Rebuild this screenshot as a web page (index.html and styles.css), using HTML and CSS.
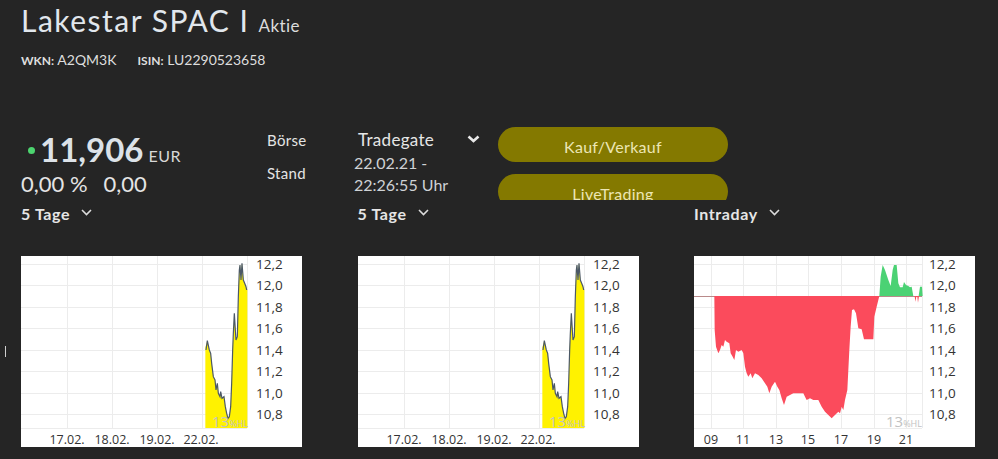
FILE: index.html
```html
<!DOCTYPE html>
<html lang="de">
<head>
<meta charset="utf-8">
<title>Lakestar SPAC I Aktie</title>
<link rel="stylesheet" href="styles.css">
</head>
<body>
<div class="page">
  <header class="head">
    <h1 class="title">Lakestar SPAC I <span class="kind">Aktie</span></h1>
    <div class="ids">
      <span class="id"><b>WKN:</b> A2QM3K</span>
      <span class="id"><b>ISIN:</b> LU2290523658</span>
    </div>
  </header>

  <section class="quote">
    <div class="price-col">
      <div class="price"><span class="dot"></span><span class="num">11,906</span><span class="cur">EUR</span></div>
      <div class="change"><span>0,00 %</span><span class="abs">0,00</span></div>
    </div>
    <div class="label-col">
      <div class="lbl">Börse</div>
      <div class="lbl lbl2">Stand</div>
    </div>
    <div class="value-col">
      <div class="exchange"><span>Tradegate</span>
        <svg class="chev-bold" width="13" height="8" viewBox="0 0 13 8"><polyline points="1.5,1.5 6.5,6 11.5,1.5" fill="none" stroke="#e8e8e8" stroke-width="2.6"/></svg>
      </div>
      <div class="date">22.02.21 -<br>22:26:55 Uhr</div>
    </div>
    <div class="btn-col">
      <div class="btn">Kauf/Verkauf</div>
      <div class="btn btn2">LiveTrading</div>
    </div>
  </section>

  <section class="charts">
    <span class="tick"></span>
    <div class="chart-col">
      <div class="range">5 Tage <svg class="chev" width="11" height="7" viewBox="0 0 11 7"><polyline points="1,1 5.5,5.5 10,1" fill="none" stroke="#dcdcdc" stroke-width="1.6"/></svg></div>
      <svg class="chart" width="281" height="191" viewBox="0 0 281 191">
        <rect width="281" height="191" fill="#fff"/>
        <g stroke="#ececec" stroke-width="1">
          <line x1="0" y1="8.5" x2="226" y2="8.5"/><line x1="0" y1="29.5" x2="226" y2="29.5"/><line x1="0" y1="51.5" x2="226" y2="51.5"/><line x1="0" y1="72.5" x2="226" y2="72.5"/><line x1="0" y1="94.5" x2="226" y2="94.5"/><line x1="0" y1="115.5" x2="226" y2="115.5"/><line x1="0" y1="137.5" x2="226" y2="137.5"/><line x1="0" y1="158.5" x2="226" y2="158.5"/><line x1="0" y1="172.5" x2="226" y2="172.5"/>
          <line x1="46.5" y1="0" x2="46.5" y2="172"/><line x1="91.5" y1="0" x2="91.5" y2="172"/><line x1="136.5" y1="0" x2="136.5" y2="172"/><line x1="181.5" y1="0" x2="181.5" y2="172"/><line x1="226.5" y1="0" x2="226.5" y2="172"/>
        </g>
        <g transform="translate(159,-6) scale(0.33333)">
          <polygon fill="#fff200" points="76,534 76,292 82,272 88,300 92,310 95,340 100,380 105,390 108,420 112,400 115,430 120,440 122,425 126,445 132,440 136,470 140,490 144,505 148,500 152,470 155,400 158,300 160,250 163,190 166,240 168,270 172,260 175,140 178,60 180,45 183,90 186,40 190,90 194,100 198,110 202,120 202,534"/>
          <polyline fill="none" stroke="#4b5866" stroke-width="1.2" vector-effect="non-scaling-stroke" points="78,300 82,272 88,300 92,310 95,340 100,380 105,390 108,420 112,400 115,430 120,440 122,425 126,445 132,440 136,470 140,490 144,505 148,500 152,470 155,400 158,300 160,250 163,190 166,240 168,270 172,260 175,140 178,60 180,45 183,90 186,40 190,90 194,100 198,110 200,120"/>
        </g>
        <text class="hl" x="191" y="171">13<tspan class="hl-s">%HL</tspan></text>
        <g class="ylab">
          <text x="235" y="13">12,2</text><text x="235" y="34">12,0</text><text x="235" y="56">11,8</text><text x="235" y="77">11,6</text><text x="235" y="99">11,4</text><text x="235" y="120">11,2</text><text x="235" y="142">11,0</text><text x="235" y="163">10,8</text>
        </g>
        <g class="xlab">
          <text x="46" y="188">17.02.</text><text x="91" y="188">18.02.</text><text x="136" y="188">19.02.</text><text x="180" y="188">22.02.</text>
        </g>
      </svg>
    </div>

    <div class="chart-col">
      <div class="range">5 Tage <svg class="chev" width="11" height="7" viewBox="0 0 11 7"><polyline points="1,1 5.5,5.5 10,1" fill="none" stroke="#dcdcdc" stroke-width="1.6"/></svg></div>
      <svg class="chart" width="281" height="191" viewBox="0 0 281 191">
        <rect width="281" height="191" fill="#fff"/>
        <g stroke="#ececec" stroke-width="1">
          <line x1="0" y1="8.5" x2="226" y2="8.5"/><line x1="0" y1="29.5" x2="226" y2="29.5"/><line x1="0" y1="51.5" x2="226" y2="51.5"/><line x1="0" y1="72.5" x2="226" y2="72.5"/><line x1="0" y1="94.5" x2="226" y2="94.5"/><line x1="0" y1="115.5" x2="226" y2="115.5"/><line x1="0" y1="137.5" x2="226" y2="137.5"/><line x1="0" y1="158.5" x2="226" y2="158.5"/><line x1="0" y1="172.5" x2="226" y2="172.5"/>
          <line x1="46.5" y1="0" x2="46.5" y2="172"/><line x1="91.5" y1="0" x2="91.5" y2="172"/><line x1="136.5" y1="0" x2="136.5" y2="172"/><line x1="181.5" y1="0" x2="181.5" y2="172"/><line x1="226.5" y1="0" x2="226.5" y2="172"/>
        </g>
        <g transform="translate(159,-6) scale(0.33333)">
          <polygon fill="#fff200" points="76,534 76,292 82,272 88,300 92,310 95,340 100,380 105,390 108,420 112,400 115,430 120,440 122,425 126,445 132,440 136,470 140,490 144,505 148,500 152,470 155,400 158,300 160,250 163,190 166,240 168,270 172,260 175,140 178,60 180,45 183,90 186,40 190,90 194,100 198,110 202,120 202,534"/>
          <polyline fill="none" stroke="#4b5866" stroke-width="1.2" vector-effect="non-scaling-stroke" points="78,300 82,272 88,300 92,310 95,340 100,380 105,390 108,420 112,400 115,430 120,440 122,425 126,445 132,440 136,470 140,490 144,505 148,500 152,470 155,400 158,300 160,250 163,190 166,240 168,270 172,260 175,140 178,60 180,45 183,90 186,40 190,90 194,100 198,110 200,120"/>
        </g>
        <text class="hl" x="191" y="171">13<tspan class="hl-s">%HL</tspan></text>
        <g class="ylab">
          <text x="235" y="13">12,2</text><text x="235" y="34">12,0</text><text x="235" y="56">11,8</text><text x="235" y="77">11,6</text><text x="235" y="99">11,4</text><text x="235" y="120">11,2</text><text x="235" y="142">11,0</text><text x="235" y="163">10,8</text>
        </g>
        <g class="xlab">
          <text x="46" y="188">17.02.</text><text x="91" y="188">18.02.</text><text x="136" y="188">19.02.</text><text x="180" y="188">22.02.</text>
        </g>
      </svg>
    </div>

    <div class="chart-col">
      <div class="range">Intraday <svg class="chev" width="11" height="7" viewBox="0 0 11 7"><polyline points="1,1 5.5,5.5 10,1" fill="none" stroke="#dcdcdc" stroke-width="1.6"/></svg></div>
      <svg class="chart" width="281" height="191" viewBox="0 0 281 191">
        <rect width="281" height="191" fill="#fff"/>
        <g stroke="#ececec" stroke-width="1">
          <line x1="0" y1="8.5" x2="228" y2="8.5"/><line x1="0" y1="29.5" x2="228" y2="29.5"/><line x1="0" y1="51.5" x2="228" y2="51.5"/><line x1="0" y1="72.5" x2="228" y2="72.5"/><line x1="0" y1="94.5" x2="228" y2="94.5"/><line x1="0" y1="115.5" x2="228" y2="115.5"/><line x1="0" y1="137.5" x2="228" y2="137.5"/><line x1="0" y1="158.5" x2="228" y2="158.5"/><line x1="0" y1="172.5" x2="228" y2="172.5"/>
          <line x1="17.5" y1="0" x2="17.5" y2="172"/><line x1="49.5" y1="0" x2="49.5" y2="172"/><line x1="82.5" y1="0" x2="82.5" y2="172"/><line x1="114.5" y1="0" x2="114.5" y2="172"/><line x1="147.5" y1="0" x2="147.5" y2="172"/><line x1="180.5" y1="0" x2="180.5" y2="172"/><line x1="212.5" y1="0" x2="212.5" y2="172"/><line x1="228.5" y1="0" x2="228.5" y2="172"/>
        </g>
        <line x1="0" y1="40.5" x2="228" y2="40.5" stroke="#b98a8a" stroke-width="1"/>
        <g transform="translate(-14,-6) scale(0.33333)">
          <polygon fill="#fb4b5c" points="103,138 104,240 108,290 115,310 120,300 125,285 130,290 135,270 140,275 148,280 152,310 158,320 163,330 168,300 175,305 185,300 190,310 195,350 200,370 205,380 212,370 217,385 225,370 235,375 245,385 255,400 262,410 268,430 275,410 285,395 292,410 298,420 305,445 312,465 320,440 330,435 340,430 355,430 370,430 375,440 380,450 390,445 400,450 415,450 425,470 435,485 445,495 455,505 465,495 475,485 480,490 485,470 490,480 495,450 502,420 508,300 512,230 516,180 522,178 528,190 535,235 545,238 552,268 580,268 583,200 590,170 595,150 598,138"/>
          <polygon fill="#4bd274" points="598,138 602,80 608,45 615,60 625,90 632,108 638,60 642,45 650,45 655,100 660,112 668,112 672,96 678,105 685,108 690,112 695,110 700,138 716,138 720,110 726,110 728,138"/>
          <polygon fill="#fb4b5c" points="704,138 706,155 709,140 712,140 714,158 717,138"/>
        </g>
        <text class="hl" x="192" y="171">13<tspan class="hl-s">%HL</tspan></text>
        <g class="ylab">
          <text x="235" y="13">12,2</text><text x="235" y="34">12,0</text><text x="235" y="56">11,8</text><text x="235" y="77">11,6</text><text x="235" y="99">11,4</text><text x="235" y="120">11,2</text><text x="235" y="142">11,0</text><text x="235" y="163">10,8</text>
        </g>
        <g class="xlab">
          <text x="17" y="188">09</text><text x="49" y="188">11</text><text x="82" y="188">13</text><text x="114" y="188">15</text><text x="147" y="188">17</text><text x="180" y="188">19</text><text x="212" y="188">21</text>
        </g>
      </svg>
    </div>
  </section>
</div>
</body>
</html>
```

FILE: styles.css
```css
html, body {
  margin: 0;
  padding: 0;
  background: #252525;
}
body {
  width: 998px;
  height: 459px;
  overflow: hidden;
  font-family: Lato, "Noto Sans", sans-serif;
  color: #e6e6e6;
}
.page {
  padding: 2px 0 0 21px;
  position: relative;
}
.title {
  margin: 0;
  font-size: 30px;
  line-height: 36px;
  font-weight: 400;
  color: #e1e7ed;
  letter-spacing: 1.5px;
}
.kind {
  font-size: 17px;
  letter-spacing: 0.4px;
  color: #dcdcdc;
}
.ids {
  margin-top: 7px;
  display: flex;
  gap: 21px;
  font-size: 14px;
  line-height: 17px;
  color: #dedede;
}
.ids b {
  font-size: 12px;
  font-weight: 700;
}
.quote {
  margin-top: 58px;
  height: 73px;
  overflow: hidden;
  display: flex;
}
.price-col {
  width: 246px;
  padding-top: 4px;
}
.price {
  display: flex;
  align-items: baseline;
  height: 36px;
  line-height: 36px;
}
.dot {
  width: 7px;
  height: 7px;
  border-radius: 50%;
  background: #4cd46f;
  margin: 0 5px 0 7px;
  align-self: center;
  position: relative;
  top: 1px;
}
.num {
  font-size: 33px;
  font-weight: 700;
  color: #dce2e8;
}
.cur {
  font-size: 16px;
  margin-left: 5px;
  color: #d8d8d8;
  letter-spacing: 0.5px;
}
.change {
  margin-top: 5px;
  font-size: 22px;
  line-height: 24px;
  color: #e4e4e4;
  display: flex;
}
.abs {
  margin-left: 16px;
}
.label-col {
  width: 87px;
  padding-top: 4px;
}
.lbl {
  font-size: 15px;
  line-height: 18px;
  color: #e4e4e4;
  letter-spacing: 0.3px;
}
.lbl2 {
  margin-top: 15px;
}
.value-col {
  width: 144px;
  padding-top: 4px;
}
.exchange {
  width: 122px;
  padding-left: 4px;
  display: flex;
  justify-content: space-between;
  align-items: center;
  font-size: 17px;
  line-height: 18px;
  color: #e6e6e6;
  letter-spacing: 0.3px;
}
.chev-bold {
  position: relative;
  top: -1px;
}
.date {
  margin-top: 3px;
  font-size: 16px;
  line-height: 22px;
  color: #cfd2d5;
}
.btn-col {
  width: 230px;
}
.btn {
  box-sizing: border-box;
  height: 35px;
  padding-top: 3px;
  border-radius: 18px;
  background: #847900;
  color: #ece6b4;
  font-size: 16px;
  line-height: 33px;
  text-align: center;
  letter-spacing: 0.3px;
}
.btn2 {
  margin-top: 12px;
}
.charts {
  margin-top: 5px;
  display: grid;
  grid-template-columns: 281px 281px 281px;
  column-gap: 55.5px;
}
.tick {
  position: absolute;
  left: 5px;
  top: 346px;
  width: 1px;
  height: 11px;
  background: #cfcfcf;
}
.range {
  font-size: 16px;
  line-height: 18px;
  font-weight: 700;
  color: #e6e6e6;
  display: flex;
  align-items: center;
  gap: 11px;
  height: 18px;
  letter-spacing: 0.6px;
}
.chev {
  position: relative;
  top: -2px;
}
.chart {
  display: block;
  margin-top: 33px;
}
.ylab text {
  font-family: "Open Sans", "DejaVu Sans", sans-serif;
  font-size: 13.5px;
  fill: #333;
}
.xlab text {
  font-family: "Open Sans", "DejaVu Sans", sans-serif;
  font-size: 12.5px;
  fill: #333;
  text-anchor: middle;
}
.hl {
  font-family: "Open Sans", "DejaVu Sans", sans-serif;
  font-size: 15px;
  fill: #c2c2c2;
}
.hl-s {
  font-size: 9px;
}
```
